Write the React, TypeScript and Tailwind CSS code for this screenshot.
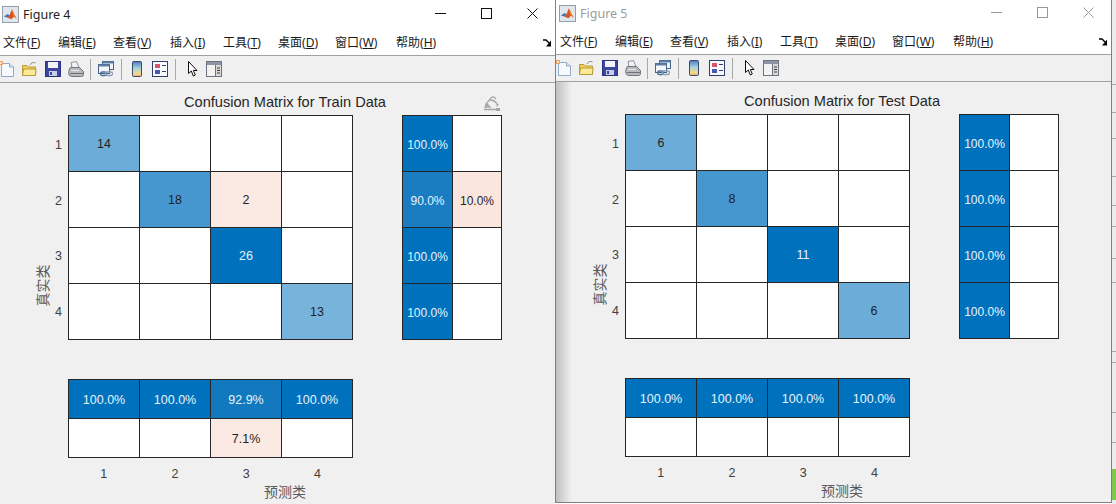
import React from 'react';

type Cell = { label?: string; bg?: string; light?: boolean };

const cjk = "font-['Noto_Sans','Noto_Sans_CJK_SC',sans-serif]";
const arial = "font-['Liberation_Sans','Noto_Sans_CJK_SC',sans-serif]";

const menus = [
  { zh: '文件', key: 'F', width: 'w-[55px]' },
  { zh: '编辑', key: 'E', width: 'w-[55px]' },
  { zh: '查看', key: 'V', width: 'w-[57px]' },
  { zh: '插入', key: 'I', width: 'w-[53px]' },
  { zh: '工具', key: 'T', width: 'w-[55px]' },
  { zh: '桌面', key: 'D', width: 'w-[57px]' },
  { zh: '窗口', key: 'W', width: 'w-[61px]' },
  { zh: '帮助', key: 'H', width: 'w-[50px]' },
];

const MatlabLogo = () => (
  <svg width="17" height="17" viewBox="0 0 18 18" className="shrink-0">
    <rect x="0.5" y="0.5" width="17" height="17" fill="#dfe6ee" stroke="#8f9aa6" />
    <path d="M2 11 L6 8.5 L8 10 L6.5 12.5 Z" fill="#3f76b0" />
    <path d="M6 12.5 L8 9.5 L10.5 3.5 L12.5 8 L15.5 13.5 L12.5 11.5 L10 14 Z" fill="#d9541e" />
    <path d="M10.5 3.5 L12.5 8 L15.5 13.5 L12 10 Z" fill="#f08a24" />
  </svg>
);

const DocIcon = () => (
  <svg width="16" height="16" viewBox="0 0 16 16" className="shrink-0">
    <path d="M2.5 2.5 H10.5 L14.5 6 V15.5 H2.5 Z" fill="#f6f9fd" stroke="#8fa9c6" />
    <path d="M10.5 2.5 V6 H14.5" fill="#d8e4f1" stroke="#8fa9c6" />
    <rect x="0" y="0" width="4" height="4" fill="#f0a060" />
    <rect x="1" y="1" width="2" height="2" fill="#fbe3c8" />
  </svg>
);

const FolderIcon = () => (
  <svg width="16" height="16" viewBox="0 0 16 16" className="shrink-0">
    <path d="M9 4 C10 1.5 12.5 1 14.5 2" fill="none" stroke="#8c8c8c" />
    <path d="M1.5 14.5 V4.5 H6 L7.5 6 H14.5 V14.5 Z" fill="#f0cf58" stroke="#b89a3a" />
    <path d="M1.5 14.5 L2.5 8 H15 L14.5 14.5 Z" fill="#fbea94" stroke="#b89a3a" />
  </svg>
);

const SaveIcon = () => (
  <svg width="16" height="16" viewBox="0 0 16 16" className="shrink-0">
    <rect x="0.5" y="0.5" width="15" height="15" fill="#3d469f" stroke="#2c3180" />
    <rect x="3" y="1" width="10" height="6" fill="#f1f3fb" />
    <rect x="4" y="10" width="8" height="5" fill="#c9cde6" />
    <rect x="5" y="11" width="2" height="3" fill="#3d469f" />
  </svg>
);

const PrintIcon = () => (
  <svg width="16" height="16" viewBox="0 0 16 16" className="shrink-0">
    <path d="M4 7 L3 1.5 L8.5 0.5 L11 6.5 Z" fill="#eef1f5" stroke="#8d949c" />
    <path d="M1.5 8 Q1.5 6.5 3 6.5 H11 Q12 6.5 13 8 L15.5 10.5 V13.5 Q15.5 15.5 13.5 15.5 H4 Q0.5 15.5 0.5 11.5 Z" fill="#b8bbbe" stroke="#73777b" />
    <path d="M2 12.5 H15" stroke="#6d7174" />
    <path d="M3 9.5 H11" stroke="#e6e8ea" />
  </svg>
);

const LinkIcon = () => (
  <svg width="16" height="16" viewBox="0 0 16 16" className="shrink-0">
    <rect x="4.5" y="0.5" width="11" height="8" fill="#eef3f8" stroke="#47658a" />
    <rect x="4.5" y="0.5" width="11" height="2" fill="#5f7fa6" />
    <rect x="0.5" y="3.5" width="11" height="9" fill="#f4f7fa" stroke="#47658a" />
    <rect x="0.5" y="3.5" width="11" height="2" fill="#5f7fa6" />
    <rect x="2.5" y="11" width="6" height="3.5" rx="1.7" fill="none" stroke="#4d6f96" strokeWidth="1.3" />
    <rect x="7.5" y="11" width="7" height="3.5" rx="1.7" fill="none" stroke="#8a9fb7" strokeWidth="1.3" />
  </svg>
);

const ColorbarIcon = () => (
  <svg width="16" height="16" viewBox="0 0 16 16" className="shrink-0">
    <defs>
      <linearGradient id="cbar" x1="0" y1="0" x2="0" y2="1">
        <stop offset="0" stopColor="#4f76c4" />
        <stop offset="0.45" stopColor="#a3d3dc" />
        <stop offset="0.8" stopColor="#f2dc8c" />
        <stop offset="1" stopColor="#eaa878" />
      </linearGradient>
    </defs>
    <rect x="3.5" y="0.5" width="9" height="15" rx="1" fill="url(#cbar)" stroke="#3b4a6a" />
  </svg>
);

const LegendIcon = () => (
  <svg width="16" height="16" viewBox="0 0 16 16" className="shrink-0">
    <rect x="0.5" y="0.5" width="15" height="15" fill="#f8f9fc" stroke="#2f3f6e" />
    <rect x="3" y="3" width="5" height="4" fill="#d9536a" />
    <rect x="3" y="9" width="5" height="4" fill="#4a57b5" />
    <rect x="10" y="4" width="4" height="1" fill="#2f3f6e" />
    <rect x="10" y="10" width="4" height="1" fill="#2f3f6e" />
  </svg>
);

const CursorIcon = () => (
  <svg width="16" height="16" viewBox="0 0 16 16" className="shrink-0">
    <path d="M3.5 0.5 V12.5 L6.3 10 L8.3 15 L10.3 14 L8.3 9.5 L12 9.5 Z" fill="#ffffff" stroke="#111111" />
  </svg>
);

const PanelIcon = () => (
  <svg width="16" height="16" viewBox="0 0 16 16" className="shrink-0">
    <rect x="0.5" y="0.5" width="15" height="15" fill="#f3f3f1" stroke="#6b7480" />
    <rect x="1" y="1" width="14" height="3" fill="#8b95a3" />
    <rect x="9" y="4" width="6" height="11" fill="#d9d9d5" />
    <path d="M9.5 4 V15" stroke="#6b7480" />
    <path d="M11 7 H14 M11 9.5 H14 M11 12 H14" stroke="#3d3d3d" />
  </svg>
);

const Sep = () => <div className="h-[21px] w-px shrink-0 bg-[#a8a8a8]" />;

const Toolbar = () => (
  <div className="flex h-[26px] items-center border-b border-[#a0a0a0] bg-[#f0f0f0] box-content">
    <DocIcon />
    <div className="ml-[6px] flex"><FolderIcon /></div>
    <div className="ml-[8px] flex"><SaveIcon /></div>
    <div className="ml-[7px] flex"><PrintIcon /></div>
    <div className="ml-[6px] flex"><Sep /></div>
    <div className="ml-[7px] flex"><LinkIcon /></div>
    <div className="ml-[7px] flex"><Sep /></div>
    <div className="ml-[7px] flex"><ColorbarIcon /></div>
    <div className="ml-[7px] flex"><LegendIcon /></div>
    <div className="ml-[7px] flex"><Sep /></div>
    <div className="ml-[9px] flex"><CursorIcon /></div>
    <div className="ml-[5px] flex"><PanelIcon /></div>
  </div>
);

const TitleBar = ({ title, active }: { title: string; active: boolean }) => {
  const stroke = active ? '#111111' : '#999999';
  return (
    <div className="flex h-[28px] items-center bg-white">
      <div className="ml-[3px] flex"><MatlabLogo /></div>
      <span className={`ml-[4px] pt-[2px] text-[12.5px] ${cjk} ${active ? 'text-[#222222]' : 'text-[#9b9b9b]'}`}>{title}</span>
      <div className="ml-auto flex">
        <div className="flex h-[28px] w-[46px] items-center justify-center pb-[2px]">
          <svg width="11" height="11" viewBox="0 0 11 11"><path d="M0 5.5 H11" stroke={stroke} /></svg>
        </div>
        <div className="flex h-[28px] w-[46px] items-center justify-center pb-[2px]">
          <svg width="11" height="11" viewBox="0 0 11 11"><rect x="0.5" y="0.5" width="10" height="10" fill="none" stroke={stroke} /></svg>
        </div>
        <div className="flex h-[28px] w-[46px] items-center justify-center pb-[2px]">
          <svg width="11" height="11" viewBox="0 0 11 11"><path d="M0.5 0.5 L10.5 10.5 M10.5 0.5 L0.5 10.5" stroke={stroke} /></svg>
        </div>
      </div>
    </div>
  );
};

const MenuBar = () => (
  <div className="flex h-[28px] items-center border-b border-[#a0a0a0] bg-white pl-[4px] pt-[2px] text-[12px] text-[#1a1a1a]">
    {menus.map((m) => (
      <span key={m.key} className={`${m.width} shrink-0 whitespace-nowrap ${cjk}`}>
        {m.zh}(<span className="underline">{m.key}</span>)
      </span>
    ))}
    <svg width="9" height="8" viewBox="0 0 9 8" className="ml-auto mr-[3px] shrink-0">
      <path d="M0 1 H3 L6 4" fill="none" stroke="#000000" strokeWidth="1.4" />
      <path d="M8 1.5 V7.5 H3 Z" fill="#000000" />
    </svg>
  </div>
);

const CellBox = ({ cell, size }: { cell: Cell; size: string }) => (
  <div
    className={`flex ${size} items-center justify-center border-l border-t border-[#262626] pt-[2px] ${arial} ${cell.bg ?? 'bg-white'} ${cell.light ? 'text-[#e6f2fb]' : 'text-[#1f1f1f]'}`}
  >
    {cell.label}
  </div>
);

const Matrix = ({ cells, cols, size }: { cells: Cell[]; cols: string; size: string }) => (
  <div className={`grid w-fit border-b border-r border-[#262626] ${cols}`}>
    {cells.map((cell, i) => (
      <CellBox key={i} cell={cell} size={size} />
    ))}
  </div>
);

type FigureProps = {
  title: string;
  main: Cell[];
  side: Cell[];
  bottom: Cell[];
  annotate?: boolean;
  shaded?: boolean;
};

const PlotArea = ({ title, main, side, bottom, annotate, shaded }: FigureProps) => (
  <div className="relative flex-1 bg-[#f0f0f0] text-[#404040]">
    {shaded && <div className="absolute inset-y-0 left-0 w-[16px] bg-gradient-to-r from-black/20 to-transparent" />}
    {annotate && (
      <svg width="18" height="16" viewBox="0 0 18 16" className="absolute left-[484px] top-[12px]">
        <path d="M2 13 L3 9 L8 3 C9 1.5 10.5 1.5 11.5 2.5 L13 4 M4 9 L7 12 H3 Z" fill="none" stroke="#a6a6a6" strokeWidth="1.3" />
        <path d="M7 5 C10 5 12 6 13.5 8 M1 14.5 H14" fill="none" stroke="#a6a6a6" strokeWidth="1.3" />
        <path d="M13 8 L16 9 L14 12 Z M13 13 H17 V16 H13 Z" fill="#a6a6a6" />
      </svg>
    )}
    <div className={`ml-[69px] flex h-[32px] w-[434px] items-center justify-center pt-[7px] text-[14.6px] text-[#262626] ${arial}`}>
      {title}
    </div>
    <div className="flex">
      <div className="flex h-[341px] w-[52px] items-center justify-center pl-[34px]">
        <span className={`shrink-0 -rotate-90 whitespace-nowrap text-[14px] text-[#595959] ${cjk}`}>真实类</span>
      </div>
      <div className={`grid h-[225px] w-[17px] grid-rows-4 pr-[6px] pt-[3px] text-right text-[12.5px] ${arial}`}>
        {['1', '2', '3', '4'].map((t) => (
          <div key={t} className="flex items-center justify-end">{t}</div>
        ))}
      </div>
      <div className="w-[434px]">
        <div className="flex gap-[49px]">
          <div className="text-[12.5px]">
            <Matrix cells={main} cols="grid-cols-[repeat(4,71px)]" size="h-[56px]" />
          </div>
          <div className="text-[12px]">
            <Matrix cells={side} cols="grid-cols-[50px_49px]" size="h-[56px]" />
          </div>
        </div>
        <div className="mt-[39px] text-[12.5px]">
          <Matrix cells={bottom} cols="grid-cols-[repeat(4,71px)]" size="h-[39px]" />
        </div>
        <div className={`mt-[7px] grid w-[285px] grid-cols-4 text-center text-[12.5px] ${arial}`}>
          {['1', '2', '3', '4'].map((t) => (
            <div key={t}>{t}</div>
          ))}
        </div>
        <div className={`-mt-[1px] text-center text-[14px] leading-[18px] text-[#595959] ${cjk}`}>预测类</div>
      </div>
    </div>
  </div>
);

const FigureWindow = (props: FigureProps & { name: string; active: boolean; className: string }) => (
  <div className={`flex w-[557px] shrink-0 flex-col overflow-hidden border-l border-[#808080] ${props.className}`}>
    <TitleBar title={props.name} active={props.active} />
    <MenuBar />
    <Toolbar />
    <PlotArea {...props} />
  </div>
);

const blue = 'bg-[#0072bd]';
const e: Cell = {};

const trainMain: Cell[] = [
  { label: '14', bg: 'bg-[#6bacd8]' }, e, e, e,
  e, { label: '18', bg: 'bg-[#4697d0]' }, { label: '2', bg: 'bg-[#fbeae4]' }, e,
  e, e, { label: '26', bg: blue, light: true }, e,
  e, e, e, { label: '13', bg: 'bg-[#78b3dc]' },
];
const trainSide: Cell[] = [
  { label: '100.0%', bg: blue, light: true }, e,
  { label: '90.0%', bg: 'bg-[#1a7dc1]', light: true }, { label: '10.0%', bg: 'bg-[#fae6df]' },
  { label: '100.0%', bg: blue, light: true }, e,
  { label: '100.0%', bg: blue, light: true }, e,
];
const trainBottom: Cell[] = [
  { label: '100.0%', bg: blue, light: true },
  { label: '100.0%', bg: blue, light: true },
  { label: '92.9%', bg: 'bg-[#1279bf]', light: true },
  { label: '100.0%', bg: blue, light: true },
  e, e, { label: '7.1%', bg: 'bg-[#fbeae4]' }, e,
];

const testMain: Cell[] = [
  { label: '6', bg: 'bg-[#6bacd8]' }, e, e, e,
  e, { label: '8', bg: 'bg-[#4697d0]' }, e, e,
  e, e, { label: '11', bg: blue, light: true }, e,
  e, e, e, { label: '6', bg: 'bg-[#6bacd8]' },
];
const testSide: Cell[] = [
  { label: '100.0%', bg: blue, light: true }, e,
  { label: '100.0%', bg: blue, light: true }, e,
  { label: '100.0%', bg: blue, light: true }, e,
  { label: '100.0%', bg: blue, light: true }, e,
];
const testBottom: Cell[] = [
  { label: '100.0%', bg: blue, light: true },
  { label: '100.0%', bg: blue, light: true },
  { label: '100.0%', bg: blue, light: true },
  { label: '100.0%', bg: blue, light: true },
  e, e, e, e,
];

const sliverRows = ['h-[85px]', 'h-[28px]', 'h-[26px]', 'h-[38px]', 'h-[29px]', 'h-[21px]', 'h-[32px]', 'h-[24px]', 'h-[69px]', 'h-[11px]', 'h-[50px]', 'h-[30px]'];

export default function App() {
  return (
    <div className="flex h-[504px] w-[1116px] overflow-hidden bg-white">
      <FigureWindow
        name="Figure 4"
        active
        className="-ml-[2px] h-[504px]"
        title="Confusion Matrix for Train Data"
        main={trainMain}
        side={trainSide}
        bottom={trainBottom}
        annotate
      />
      <FigureWindow
        name="Figure 5"
        active={false}
        className="-mt-[1px] h-[504px] border-b border-r"
        title="Confusion Matrix for Test Data"
        main={testMain}
        side={testSide}
        bottom={testBottom}
        shaded
      />
      <div className="flex flex-1 flex-col bg-[#ececec]">
        {sliverRows.map((h, i) => (
          <div key={i} className={`${h} shrink-0 border-b border-[#a8a8a8]`} />
        ))}
        <div className="mt-auto h-[31px] bg-[#7ec850]" />
        <div className="h-[4px]" />
      </div>
    </div>
  );
}
